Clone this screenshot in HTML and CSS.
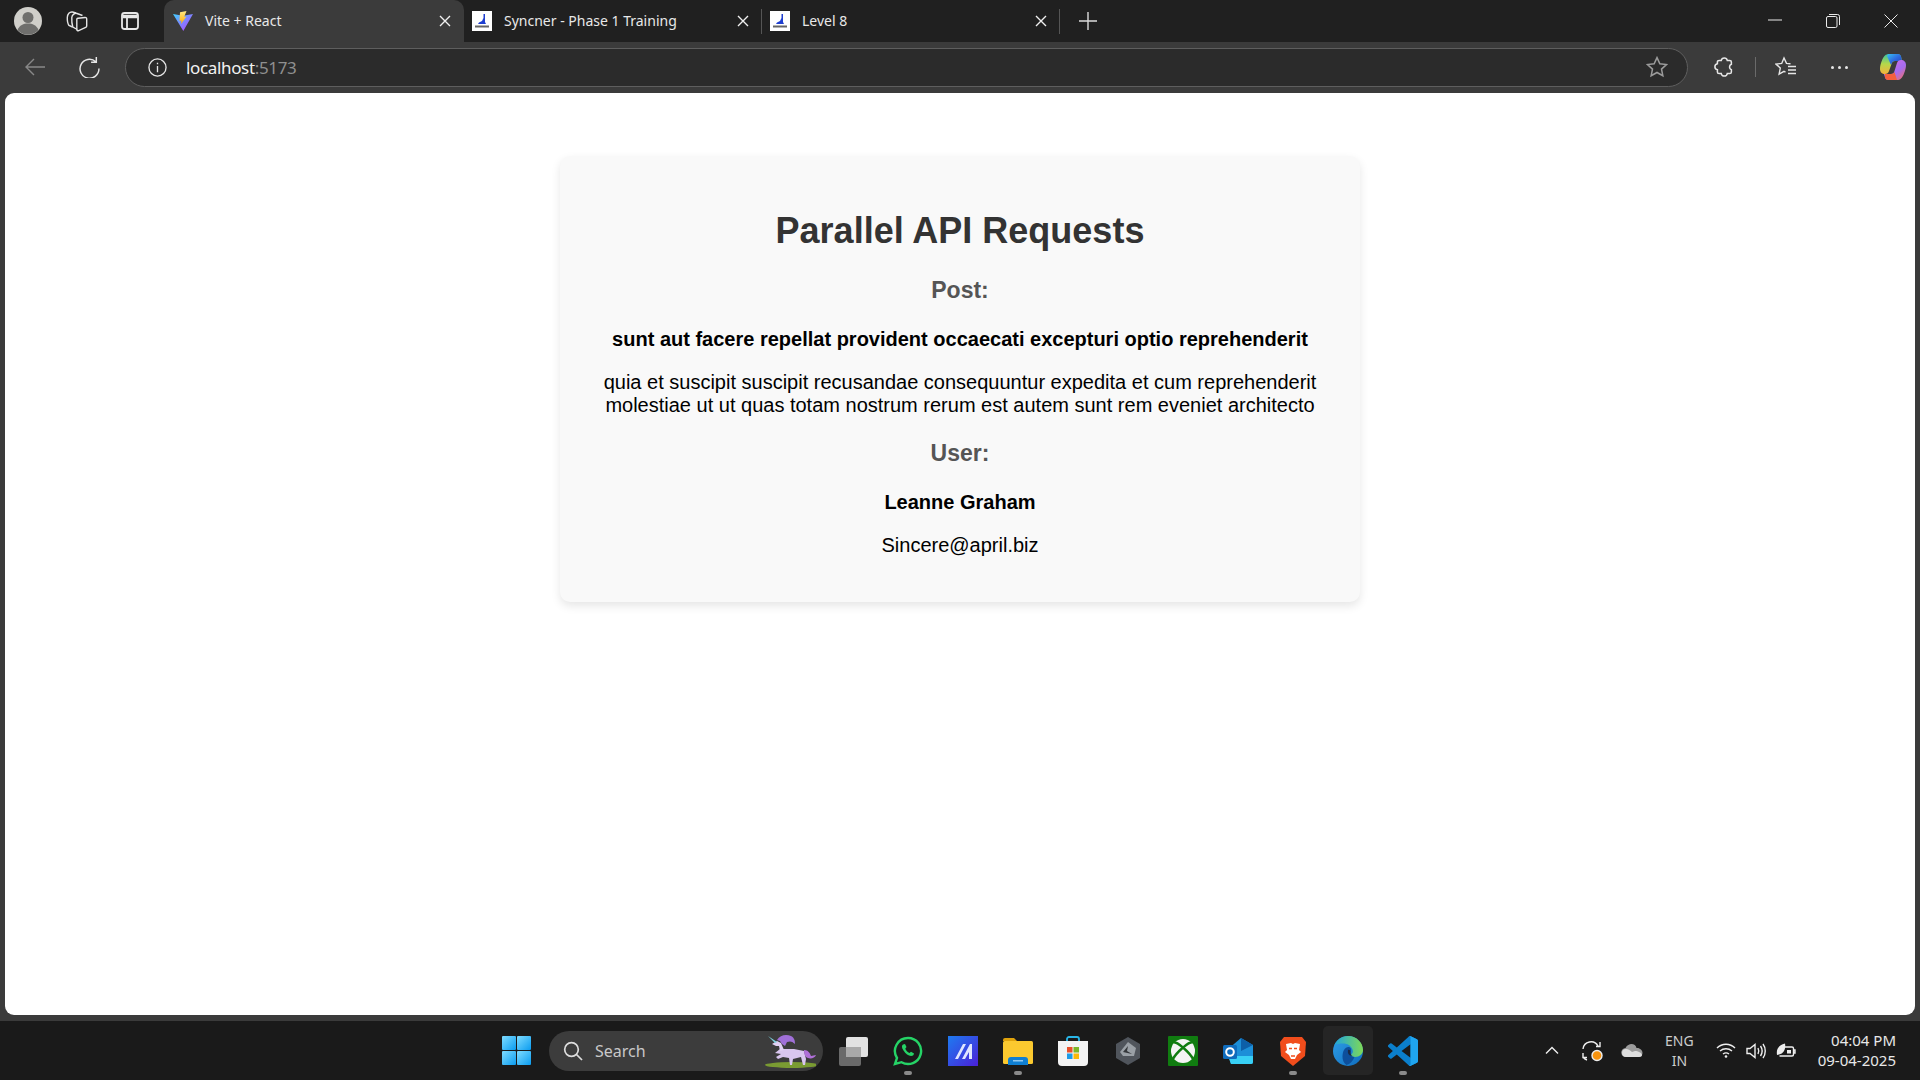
FILE: index.html
```html
<!DOCTYPE html>
<html lang="en">

<head>
    <meta charset="utf-8" />
    <title>Vite + React</title>
    <link rel="stylesheet" href="styles.css">
</head>

<body>
    <div class="tabstrip">
        <div class="strip-left">
            <svg class="avatar" viewBox="0 0 28 28"><circle cx="14" cy="14" r="14" fill="#d0cfca"/><circle cx="14" cy="10.5" r="5.5" fill="#6f6f6d"/><path d="M3.5 23c2-5 6-6.5 10.5-6.5s8.5 1.5 10.5 6.5a14 14 0 0 1-21 0z" fill="#6f6f6d"/></svg>
            <svg class="strip-icon" viewBox="0 0 24 24" fill="none" stroke="#e4e4e4" stroke-width="1.4"><path d="M13 9.300L20 8.500c1-.1 1.700.5 1.700 1.400V17c0 .7-.3 1.100-1 1.400l-7 3.200c-1 .4-1.900-.1-1.900-1.200V10.500c0-.7.300-1.100 1-1.200z"/><path d="M17.500 6.500L12 4.500c-2-.7-5 1-5.200 4-.2 3.500.2 7 1 9.500l4.500 2.500"/><path d="M11 4L7.500 3C4.500 2.500 2.500 5 2.300 8.500c-.1 3 .6 6.500 1.700 8l3.500 1.500"/></svg>
            <svg class="strip-icon tabs-icon" viewBox="0 0 24 24" fill="none" stroke="#e8e8e8" stroke-width="1.8"><rect x="4" y="4" width="16" height="16" rx="2.5"/><path d="M4.500 7.500h15" stroke-width="3.5"/><path d="M9 9v11"/></svg>
        </div>
        <div class="tab tab-active">
            <svg class="favicon" viewBox="0 0 20 20"><defs><linearGradient id="vt" x1="0" y1="0" x2="1" y2="1"><stop offset="0" stop-color="#41d1ff"/><stop offset="1" stop-color="#bd34fe"/></linearGradient><linearGradient id="vb" x1="0" y1="0" x2="0" y2="1"><stop offset="0" stop-color="#ffea83"/><stop offset="1" stop-color="#ffa800"/></linearGradient></defs><path d="M0 3l10 1.800L20 3 10.300 20z" fill="url(#vt)"/><path d="M13.500 0L7 1.300 6.500 10l2-.4-.5 3.400 5.500-7.500-2.300.4z" fill="url(#vb)"/></svg>
            <span class="tab-title">Vite + React</span>
            <svg class="tab-close" viewBox="0 0 12 12"><path d="M1 1l10 10M11 1L1 11"/></svg>
        </div>
        <div class="tab">
            <svg class="favicon" viewBox="0 0 20 20"><rect width="20" height="20" fill="#fff"/><path d="M11.500 3h1.500v8l1 2H6l1-1.500 3-1.500 1.500-3z" fill="#1f3fd0"/><rect x="3" y="14.500" width="14" height="2" fill="#666"/></svg>
            <span class="tab-title">Syncner - Phase 1 Training</span>
            <svg class="tab-close" viewBox="0 0 12 12"><path d="M1 1l10 10M11 1L1 11"/></svg>
        </div>
        <div class="tab">
            <svg class="favicon" viewBox="0 0 20 20"><rect width="20" height="20" fill="#fff"/><path d="M11.500 3h1.500v8l1 2H6l1-1.500 3-1.500 1.500-3z" fill="#1f3fd0"/><rect x="3" y="14.500" width="14" height="2" fill="#666"/></svg>
            <span class="tab-title">Level 8</span>
            <svg class="tab-close" viewBox="0 0 12 12"><path d="M1 1l10 10M11 1L1 11"/></svg>
        </div>
        <svg class="new-tab" viewBox="0 0 18 18"><path d="M9 0v18M0 9h18"/></svg>
        <div class="window-controls">
            <svg viewBox="0 0 14 14"><path d="M0 6h14"/></svg>
            <svg viewBox="0 0 14 14"><rect x=".5" y="2.500" width="10.500" height="11" rx="1.500"/><path d="M3 .5h8.500a2 2 0 0 1 2 2V11"/></svg>
            <svg viewBox="0 0 14 14"><path d="M.5.5l13 13M13.500.5l-13 13"/></svg>
        </div>
    </div>

    <div class="toolbar">
        <svg class="tool-back" viewBox="0 0 20 20"><path d="M1 10h19M9 2l-8 8 8 8"/></svg>
        <svg class="tool-reload" viewBox="0 0 20 20"><path d="M16 4.500a9 9 0 1 0 3 6.500M16.500 0v5H11.500"/></svg>
        <div class="address">
            <svg class="info" viewBox="0 0 20 20"><circle cx="10" cy="10" r="9"/><path d="M10 8.500V15M10 5v1.500"/></svg>
            <span class="url">localhost<span class="url-port">:5173</span></span>
            <svg class="star" viewBox="0 0 20 20"><path d="M10 1.500l2.600 5.600 6 .7-4.500 4.100 1.200 6L10 15l-5.300 2.900 1.200-6L1.400 7.800l6-.7z"/></svg>
        </div>
        <svg class="tool-ext" viewBox="0 0 20 20"><path d="M7.500 4a2.800 2.800 0 0 1 5.500 0h2.200a1.500 1.500 0 0 1 1.500 1.500v2a2.700 2.700 0 0 0 0 5v2a1.500 1.500 0 0 1-1.500 1.500H13a2.800 2.800 0 0 1-5.500 0H5.500A1.500 1.500 0 0 1 4 14.500v-2a2.800 2.800 0 0 1 0-5.500v-1.500A1.500 1.500 0 0 1 5.500 4z"/></svg>
        <div class="tool-sep"></div>
        <svg class="tool-favs" viewBox="0 0 22 20"><path d="M15.500 6.800l-4-.4L9 1 6.700 6.400l-5.700.7 4.300 4-1.200 6.100L9 14.300l1.500.8"/><path d="M13 9.500h8M13 13h8M13 16.500h8"/></svg>
        <div class="tool-dots"><span></span><span></span><span></span></div>
        <svg class="copilot" viewBox="0 0 28 28"><defs><linearGradient id="cpa" x1="0" y1="0" x2="1" y2="1"><stop offset="0" stop-color="#38c0f0"/><stop offset=".5" stop-color="#2f6ae0"/><stop offset="1" stop-color="#1d3fb0"/></linearGradient><linearGradient id="cpb" x1="0" y1="0" x2="1" y2="1"><stop offset="0" stop-color="#e070e0"/><stop offset=".6" stop-color="#a56cf0"/><stop offset="1" stop-color="#ff6f50"/></linearGradient><linearGradient id="cpc" x1="0" y1="0" x2="0" y2="1"><stop offset="0" stop-color="#3cc0a0"/><stop offset=".5" stop-color="#b4d84a"/><stop offset="1" stop-color="#f5b13c"/></linearGradient></defs><path d="M10 1h9c1.500 0 2.500 1 3 2.500L23 8H16c-2 0-3 1-3.500 3L10 18c-.5 2-2 3-4 3-3 0-5-2-5-5 0-5 3-12 5-13.500C7 1.500 8.500 1 10 1z" fill="url(#cpc)"/><path d="M10 1h9c1.500 0 2.500 1 3 2.500L23 8H16c-2 0-3 1-3.500 3L12 12 8 3c.5-1 1-2 2-2z" fill="url(#cpa)"/><path d="M18 27H9c-1.500 0-2.500-1-3-2.500L5 21h7c2 0 3-1 3.500-3L18 10c.5-2 2-3 4-3 3 0 5 2 5 5 0 5-3 12-5 13.500-1 1-2.500 1.500-4 1.500z" fill="url(#cpb)"/><path d="M6 21h6c2 0 3-1 3.500-2l2.500 8H9c-1.500 0-2.500-1-3-2.500z" fill="#f4603c"/></svg>
    </div>

    <div class="viewport">
        <div class="card">
            <h1 class="card-title">Parallel API Requests</h1>
            <h2 class="card-heading">Post:</h2>
            <h3 class="item-title">sunt aut facere repellat provident occaecati excepturi optio reprehenderit</h3>
            <p class="item-text">quia et suscipit suscipit recusandae consequuntur expedita et cum reprehenderit molestiae ut ut quas totam nostrum rerum est autem sunt rem eveniet architecto</p>
            <h2 class="card-heading">User:</h2>
            <h3 class="item-title">Leanne Graham</h3>
            <p class="item-text">Sincere@april.biz</p>
        </div>
    </div>

    <div class="taskbar">
        <div class="task-center">
            <svg class="task-start" viewBox="0 0 29 29"><defs><linearGradient id="win" x1="0" y1="0" x2="1" y2="1"><stop offset="0" stop-color="#7fdcff"/><stop offset="1" stop-color="#0a9cf0"/></linearGradient></defs><rect width="14" height="14" rx="1" fill="url(#win)"/><rect x="15" width="14" height="14" rx="1" fill="url(#win)"/><rect y="15" width="14" height="14" rx="1" fill="url(#win)"/><rect x="15" y="15" width="14" height="14" rx="1" fill="url(#win)"/></svg>
            <div class="search">
                <svg class="search-icon" viewBox="0 0 20 20"><circle cx="8.500" cy="8.500" r="6.800"/><path d="M13.500 13.500l5.500 5.500"/></svg>
                <span class="search-label">Search</span>
                <svg class="unicorn" viewBox="0 0 54 36"><ellipse cx="30" cy="32" rx="27" ry="3" fill="#7a9b32"/><path d="M13 20l5-4 14 0 10 2 2 8-1 6h-2l-2-8-8 2-1 6h-2l-1-7-6-1-5 2-2-2 5-3z" fill="#d9c6ef"/><path d="M22 17l-3-7-4-2-5 3 4 2 3 0 1 5z" fill="#e0d0f3"/><path d="M6 3l9 6-2 1z" fill="#7fd4e0"/><path d="M15 7c3-5 9-6 14-4 4 2 4 6 4 8-3-3-5-3-8-2l-2 4-3-2-2-3z" fill="#a070d8"/><path d="M42 17c4 0 6 3 7 6l5-1c-1 3-5 4-8 3-3-1-4-4-4-8z" fill="#b070d8"/></svg>
            </div>
            <div class="task-app">
                <svg viewBox="0 0 30 30"><rect x="1" y="11" width="22" height="19" rx="2" fill="#6a6a6a"/><rect x="8" y="1" width="22" height="20" rx="2" fill="#e2e2e2"/><rect x="8" y="11" width="15" height="10" fill="#a9a9a9"/></svg>
            </div>
            <div class="task-app task-open">
                <svg viewBox="0 0 30 30"><path d="M15 2a13 13 0 0 0-11 20L2 28l6.500-1.800A13 13 0 1 0 15 2z" fill="none" stroke="#25d366" stroke-width="2.4"/><path d="M10 8.500c-1.500 1-1.500 3 .5 6s5 5.500 7.500 5.500c2 0 3-1.500 3-2.500l-3-1.800-1.500 1.300c-2-.8-3.500-2.500-4.200-4.300L13.500 11l-1.500-3z" fill="#25d366"/></svg>
            </div>
            <div class="task-app">
                <svg viewBox="0 0 30 30"><defs><linearGradient id="ms" x1="0" y1="0" x2="1" y2="1"><stop offset="0" stop-color="#1e7bf0"/><stop offset="1" stop-color="#4a20d8"/></linearGradient></defs><rect width="30" height="30" fill="url(#ms)"/><path d="M7 23L15 8h3L10 23zM14 23l8-15h2v15h-3v-7l-4 7z" fill="#dfe6ff"/></svg>
            </div>
            <div class="task-app task-open">
                <svg viewBox="0 0 30 30"><path d="M0 4a2 2 0 0 1 2-2h9l3 3H0z" fill="#e0a30c"/><rect y="5" width="30" height="23" rx="1.500" fill="#fbc92f"/><path d="M5 24a3 3 0 0 1 3-3h14a3 3 0 0 1 3 3v5H5z" fill="#0f7fd2"/><rect x="10" y="24" width="10" height="1.500" fill="#8ec8ef"/></svg>
            </div>
            <div class="task-app">
                <svg viewBox="0 0 30 30"><path d="M9 7V3a2 2 0 0 1 2-2h8a2 2 0 0 1 2 2v4" fill="none" stroke="#29b6e8" stroke-width="1.8"/><path d="M0 5h30v21a4 4 0 0 1-4 4H4a4 4 0 0 1-4-4z" fill="#f3f3f3"/><rect x="9" y="11" width="5.500" height="5.500" fill="#e8502a"/><rect x="15.500" y="11" width="5.500" height="5.500" fill="#7bb72a"/><rect x="9" y="17.500" width="5.500" height="5.500" fill="#1d9be8"/><rect x="15.500" y="17.500" width="5.500" height="5.500" fill="#fbb80a"/></svg>
            </div>
            <div class="task-app">
                <svg viewBox="0 0 30 30"><path d="M15 1l12 7v14l-12 7-12-7V8z" fill="#50555c"/><path d="M15 6l8 6-2 8H10l-3-4z" fill="#9aa0a6"/><path d="M15 10l-5 6 9 2-5-3z" fill="#34373b"/></svg>
            </div>
            <div class="task-app">
                <svg viewBox="0 0 30 30"><rect width="30" height="30" rx="1" fill="#107c10"/><circle cx="15" cy="15" r="12" fill="#f4f4f4"/><path d="M15 11.500C12 9 9 6 6 6.500M15 11.500C18 9 21 6 24 6.500M15 11.500C11 15 7 19 5 23M15 11.500C19 15 23 19 25 23" fill="none" stroke="#107c10" stroke-width="2.4"/></svg>
            </div>
            <div class="task-app">
                <svg viewBox="0 0 30 30"><path d="M4 14l14-12 12 7v17a2 2 0 0 1-2 2H8z" fill="#1c8fd8"/><path d="M5 20h25v6a2 2 0 0 1-2 2H8z" fill="#38d0f5"/><path d="M18 2l12 7-12 6z" fill="#0d5fa8"/><rect y="9" width="14" height="14" rx="1.500" fill="#0f6cbd"/><circle cx="7" cy="16" r="3.800" fill="none" stroke="#fff" stroke-width="2"/></svg>
            </div>
            <div class="task-app task-open">
                <svg viewBox="0 0 30 30"><path d="M6 1h18l4 5-1 14-12 10L3 20 2 6z" fill="#f14d1c"/><path d="M8 8l5-1 2 1 2-1 5 1-1 6 2 2-4 3-2 4h-4l-2-4-4-3 2-2z" fill="#fff"/><path d="M11 12.500h3M16 12.500h3M13 20h4" stroke="#f14d1c" stroke-width="1.5"/></svg>
            </div>
            <div class="task-app task-current">
                <svg viewBox="0 0 30 30"><defs><linearGradient id="eg" x1="0" y1="0" x2="1" y2="1"><stop offset="0" stop-color="#2f9fe8"/><stop offset="1" stop-color="#0f6cbd"/></linearGradient><linearGradient id="eh" x1="0" y1="0" x2="1" y2="0"><stop offset="0" stop-color="#1fa5dc"/><stop offset="1" stop-color="#7ed957"/></linearGradient></defs><circle cx="15" cy="15" r="15" fill="url(#eg)"/><path d="M1.500 9C4 3.500 9 0 15 0c9 0 15 7 15 14 0 4-3.500 7-8 7-2.500 0-4.500-1-4.500-2 2-1 3-3 2-5.500C18 9.500 14 7.500 10.500 7.500c-4 0-7 .5-9 1.500z" fill="url(#eh)"/><path d="M11 14c1.500-2.500 4-3.500 6-2.500 1.500 1 1.500 3 .5 5s.5 4 4 4.500c-1.500 4-4.500 7-8 8-3-2-4-5-4-8.500 0-2.500.5-5 1.500-6.500z" fill="#0d4f9c"/><path d="M15 14c1.500-.5 2.500.5 2.500 2s.5 3 2 4c-2 0-4-1-4.500-3-.3-1 0-2 0-3z" fill="#1b2a44"/></svg>
            </div>
            <div class="task-app task-open">
                <svg viewBox="0 0 24 24"><path d="M23.150 2.587L18.210.21a1.494 1.494 0 0 0-1.705.29l-9.460 8.630-4.120-3.128a.999.999 0 0 0-1.276.057L.327 7.261A1 1 0 0 0 .326 8.740L3.899 12 .326 15.260a1 1 0 0 0 .001 1.479L1.650 17.940a.999.999 0 0 0 1.276.057l4.120-3.128 9.460 8.630a1.492 1.492 0 0 0 1.704.29l4.942-2.377A1.500 1.500 0 0 0 24 20.060V3.939a1.500 1.500 0 0 0-.850-1.352zm-5.146 14.861L10.826 12l7.178-5.448v10.896z" fill="#0b7fcc"/><path d="M16.500.5a1.494 1.494 0 0 1 1.710-.29l4.940 2.377A1.500 1.500 0 0 1 24 3.939V20.060a1.500 1.500 0 0 1-.850 1.352l-4.940 2.378a1.492 1.492 0 0 1-1.710-.290c.6.500 1.500.100 1.500-.700V1.200c0-.800-.900-1.200-1.500-.700z" fill="#1fa5f0"/></svg>
            </div>
        </div>
        <div class="tray">
            <svg class="tray-chevron" viewBox="0 0 14 9"><path d="M1 7.500l6-6 6 6"/></svg>
            <svg class="tray-sync" viewBox="0 0 22 22"><path d="M2 9a8 8 0 0 1 15-3M19 2v4.500h-4M6 20a8 8 0 0 1-4-3M2 13v4.500h4" fill="none" stroke="#eee" stroke-width="1.4"/><circle cx="16" cy="15.500" r="5" fill="#f7930e"/></svg>
            <svg class="tray-cloud" viewBox="0 0 22 13"><path d="M5 13a4.500 4.500 0 0 1-.5-9C6 1 8.500 0 10.500 0c2.500 0 4.500 1.500 5 4 3-.5 6 2 6 5 0 2-1.500 4-4 4z" fill="#9c9c9c"/><path d="M5 13a4 4 0 0 1 0-8c2 0 4 1 6 3l3-1c3 0 7 2 7 4 0 1-1 2-3 2z" fill="#dedede"/></svg>
            <div class="tray-lang"><span>ENG</span><span>IN</span></div>
            <svg class="tray-wifi" viewBox="0 0 20 15"><path d="M1 5c5-5 13-5 18 0M4 8c3.500-3 8.500-3 12 0M7 11c2-1.500 4-1.500 6 0"/><circle cx="10" cy="13.500" r="1.300" fill="#eee" stroke="none"/></svg>
            <svg class="tray-volume" viewBox="0 0 20 16"><path d="M1 5.500h3L9 1.500v13L4 10.500H1zM12 5c1 2 1 4 0 6M14.500 3c2 3 2 7 0 10M17 1c3 4 3 10 0 14"/></svg>
            <svg class="tray-battery" viewBox="0 0 20 15"><path d="M7 4h9a1.500 1.500 0 0 1 1.500 1.500v6A1.500 1.500 0 0 1 16 13H3.500M17.500 7H19v3h-1.500"/><path d="M1 12C0 6 3 2 9 .5c1 5-1 10-6 11z" fill="#eee" stroke="none"/><path d="M11 7h4v3.500h-4z" fill="#eee" stroke="none"/></svg>
            <div class="tray-clock"><span>04:04 PM</span><span>09-04-2025</span></div>
        </div>
    </div>
</body>

</html>
```

FILE: styles.css
```css
html,
body {
    margin: 0;
    height: 100%;
}

body {
    width: 1920px;
    height: 1080px;
    overflow: hidden;
    display: flex;
    flex-direction: column;
    background-color: #3b3b3b;
    font-family: "Noto Sans", sans-serif;
    color: #e8e8e8;
}

svg {
    display: block;
    flex: none;
}

/* tab strip */

.tabstrip {
    height: 42px;
    display: flex;
    align-items: center;
    background-color: #202020;
}

.strip-left {
    width: 164px;
    display: flex;
    align-items: center;
    flex: none;
    padding-left: 14px;
    box-sizing: border-box;
}

.avatar {
    width: 28px;
    height: 28px;
}

.strip-icon {
    width: 24px;
    height: 24px;
    margin-left: 23px;
}

.tabs-icon {
    margin-left: 29px;
}

.tab {
    width: 298px;
    height: 42px;
    display: flex;
    align-items: center;
    box-sizing: border-box;
    padding: 0 13px 0 8px;
    position: relative;
    flex: none;
}

.tab::after {
    content: "";
    position: absolute;
    right: 0;
    top: 9px;
    height: 25px;
    width: 1px;
    background-color: #555;
}

.tab-active {
    width: 300px;
    background-color: #3b3b3b;
    border-radius: 10px 10px 0 0;
    padding-left: 9px;
}

.tab-active::after {
    display: none;
}

.favicon {
    width: 20px;
    height: 20px;
}

.tab-title {
    margin-left: 12px;
    margin-top: -2px;
    flex: 1;
    font-size: 14px;
    white-space: nowrap;
}

.tab-close {
    width: 12px;
    height: 12px;
    fill: none;
    stroke: #f0f0f0;
    stroke-width: 1.4;
}

.new-tab {
    width: 18px;
    height: 18px;
    margin-left: 19px;
    fill: none;
    stroke: #dcdcdc;
    stroke-width: 1.4;
}

.window-controls {
    margin-left: auto;
    display: flex;
    align-items: center;
    gap: 44px;
    padding-right: 22px;
}

.window-controls svg {
    width: 14px;
    height: 14px;
    fill: none;
    stroke: #eaeaea;
    stroke-width: 1;
}

/* toolbar */

.toolbar {
    height: 51px;
    display: flex;
    align-items: center;
    padding-bottom: 1px;
    box-sizing: border-box;
    background-color: #3b3b3b;
}

.toolbar svg {
    fill: none;
    stroke: #e6e6e6;
    stroke-width: 1.4;
}

.tool-back {
    width: 20px;
    height: 20px;
    margin-left: 25px;
    opacity: 0.45;
}

.tool-reload {
    width: 21px;
    height: 21px;
    margin-left: 34px;
}

.address {
    width: 1563px;
    height: 39px;
    margin-left: 25px;
    box-sizing: border-box;
    display: flex;
    align-items: center;
    border: 1.5px solid #5e5e5e;
    border-radius: 20px;
    background-color: #2b2b2b;
    padding-left: 22px;
    padding-right: 19px;
    flex: none;
}

.toolbar .info {
    width: 19px;
    height: 19px;
}

.url {
    margin-left: 19px;
    font-size: 17px;
    letter-spacing: -0.35px;
    flex: 1;
    color: #f2f2f2;
}

.url-port {
    color: #8f8f8f;
}

.toolbar .star {
    width: 22px;
    height: 22px;
    stroke: #9b9b9b;
}

.tool-ext {
    width: 22px;
    height: 22px;
    margin-left: 25px;
}

.tool-sep {
    width: 1px;
    height: 20px;
    margin-left: 20px;
    background-color: #6a6a6a;
}

.tool-favs {
    width: 22px;
    height: 22px;
    margin-left: 19px;
}

.tool-dots {
    display: flex;
    gap: 4px;
    margin-left: 34px;
}

.tool-dots span {
    width: 3px;
    height: 3px;
    border-radius: 50%;
    background-color: #e6e6e6;
}

.toolbar .copilot {
    width: 28px;
    height: 28px;
    margin-left: 31px;
    stroke: none;
}

/* page content */

.viewport {
    flex: 1;
    margin: 0 5px;
    padding-top: 63px;
    background-color: #ffffff;
    border-radius: 9px;
}

.card {
    width: 800px;
    box-sizing: border-box;
    margin: 0 auto;
    padding: 30px 30px 25px;
    text-align: center;
    background-color: #f9f9f9;
    border-radius: 10px;
    box-shadow: 0 4px 10px rgba(0, 0, 0, 0.1);
    font-family: "Liberation Sans", Arial, sans-serif;
    color: #000000;
}

.card-title {
    margin: 24px 0 25px;
    font-size: 36px;
    color: #333333;
}

.card-heading {
    margin: 23px 0 24px;
    font-size: 23px;
    color: #555555;
}

.item-title {
    margin: 20px 0;
    font-size: 20px;
}

.item-text {
    margin: 20px 0;
    font-size: 20px;
}

/* taskbar */

.taskbar {
    height: 59px;
    margin-top: 6px;
    display: flex;
    align-items: center;
    position: relative;
    background-color: #1a1a1a;
}

.task-center {
    display: flex;
    align-items: center;
    padding-left: 502px;
}

.task-start {
    width: 29px;
    height: 29px;
}

.search {
    width: 274px;
    height: 40px;
    margin-left: 18px;
    margin-right: 2px;
    box-sizing: border-box;
    display: flex;
    align-items: center;
    padding-left: 14px;
    border-radius: 20px;
    background-color: #3c3c3c;
}

.search-icon {
    width: 20px;
    height: 20px;
    fill: none;
    stroke: #dddddd;
    stroke-width: 1.7;
}

.search-label {
    margin-left: 12px;
    flex: 1;
    font-size: 16px;
    color: #c8c8c8;
}

.unicorn {
    width: 54px;
    height: 36px;
    margin-right: 7px;
}

.task-app {
    width: 55px;
    height: 49px;
    display: flex;
    align-items: center;
    justify-content: center;
    position: relative;
    border-radius: 5px;
}

.task-app svg {
    width: 30px;
    height: 30px;
}

.task-open::after {
    content: "";
    position: absolute;
    bottom: 0;
    left: 24px;
    width: 8px;
    height: 4px;
    border-radius: 2px;
    background-color: #8a8a8a;
}

.task-current {
    width: 50px;
    margin: 0 2.5px;
    background-color: #252525;
}

.task-current::after {
    left: 15px;
    width: 20px;
    background-color: #d8a0e0;
}

.tray {
    position: absolute;
    right: 24px;
    top: 0;
    height: 100%;
    display: flex;
    align-items: center;
    color: #e8e8e8;
}

.tray svg {
    fill: none;
    stroke: #eeeeee;
    stroke-width: 1.4;
}

.tray-chevron {
    width: 14px;
    height: 9px;
    stroke-width: 2;
}

.tray-sync {
    width: 22px;
    height: 22px;
    margin-left: 22px;
}

.tray .tray-cloud {
    width: 22px;
    height: 13px;
    margin-left: 18px;
    stroke: none;
}

.tray-lang {
    margin-left: 22px;
    display: flex;
    flex-direction: column;
    align-items: center;
    font-size: 14px;
    line-height: 20px;
    color: #cccccc;
}

.tray-wifi {
    width: 20px;
    height: 15px;
    margin-left: 22px;
}

.tray-volume {
    width: 20px;
    height: 16px;
    margin-left: 10px;
}

.tray-battery {
    width: 20px;
    height: 15px;
    margin-left: 10px;
}

.tray-clock {
    margin-left: 22px;
    margin-top: -2px;
    display: flex;
    flex-direction: column;
    align-items: flex-end;
    font-size: 15px;
    line-height: 20px;
}
```
